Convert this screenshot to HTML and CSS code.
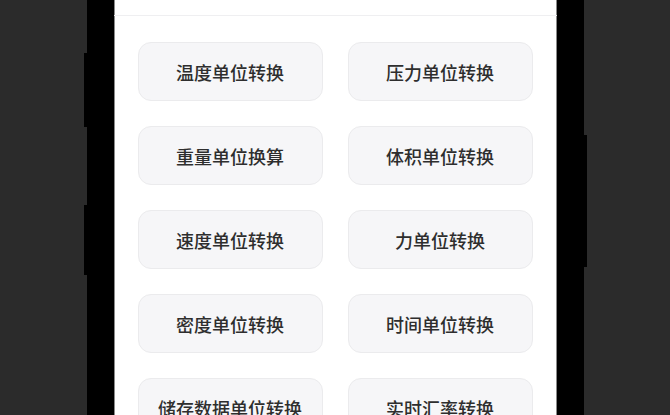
FILE: index.html
```html
<!DOCTYPE html>
<html>
  <head>
    <title>单位转换</title>
    <link rel="stylesheet" href="styles.css">
  </head>
  <body>
    <div class="phone">
      <span class="side-btn left-a"></span>
      <span class="side-btn left-b"></span>
      <span class="side-btn right-a"></span>
      <div class="screen">
        <div class="topbar"></div>
        <div class="menu">
          <button class="item">温度单位转换</button>
          <button class="item">压力单位转换</button>
          <button class="item">重量单位换算</button>
          <button class="item">体积单位转换</button>
          <button class="item">速度单位转换</button>
          <button class="item">力单位转换</button>
          <button class="item">密度单位转换</button>
          <button class="item">时间单位转换</button>
          <button class="item">储存数据单位转换</button>
          <button class="item">实时汇率转换</button>
        </div>
      </div>
    </div>
  </body>
</html>
```

FILE: styles.css
```css
body {
  margin: 0;
  background-color: #2b2b2b;
  height: 415px;
  overflow: hidden;
  font-family: "Noto Sans CJK SC", "Noto Sans", sans-serif;
}
.phone {
  position: relative;
  width: 443px;
  height: 415px;
  margin: 0 auto;
  background-color: #000;
  border-left: 27px solid #000;
  border-right: 27px solid #000;
}
.side-btn {
  position: absolute;
  width: 3px;
  background-color: #000;
}
.left-a {
  left: -30px;
  top: 53px;
  height: 74px;
}
.left-b {
  left: -30px;
  top: 205px;
  height: 70px;
}
.right-a {
  right: -30px;
  top: 135px;
  height: 132px;
}
.screen {
  height: 100%;
  background-color: #fff;
  box-shadow: inset 1px 0 0 #8a8a8a, inset -1px 0 0 #8a8a8a;
}
.topbar {
  height: 15px;
  border-bottom: 1px solid #efeff1;
}
.menu {
  display: grid;
  grid-template-columns: 1fr 1fr;
  gap: 25px;
  padding: 26px 24px 0 24px;
}
.item {
  height: 59px;
  background-color: #f6f6f8;
  border: 1px solid #ebebed;
  border-radius: 13px;
  font-family: "Noto Sans CJK SC", "Noto Sans", sans-serif;
  font-size: 18px;
  font-weight: 500;
  color: #2e2e2e;
  padding: 0;
}
```
